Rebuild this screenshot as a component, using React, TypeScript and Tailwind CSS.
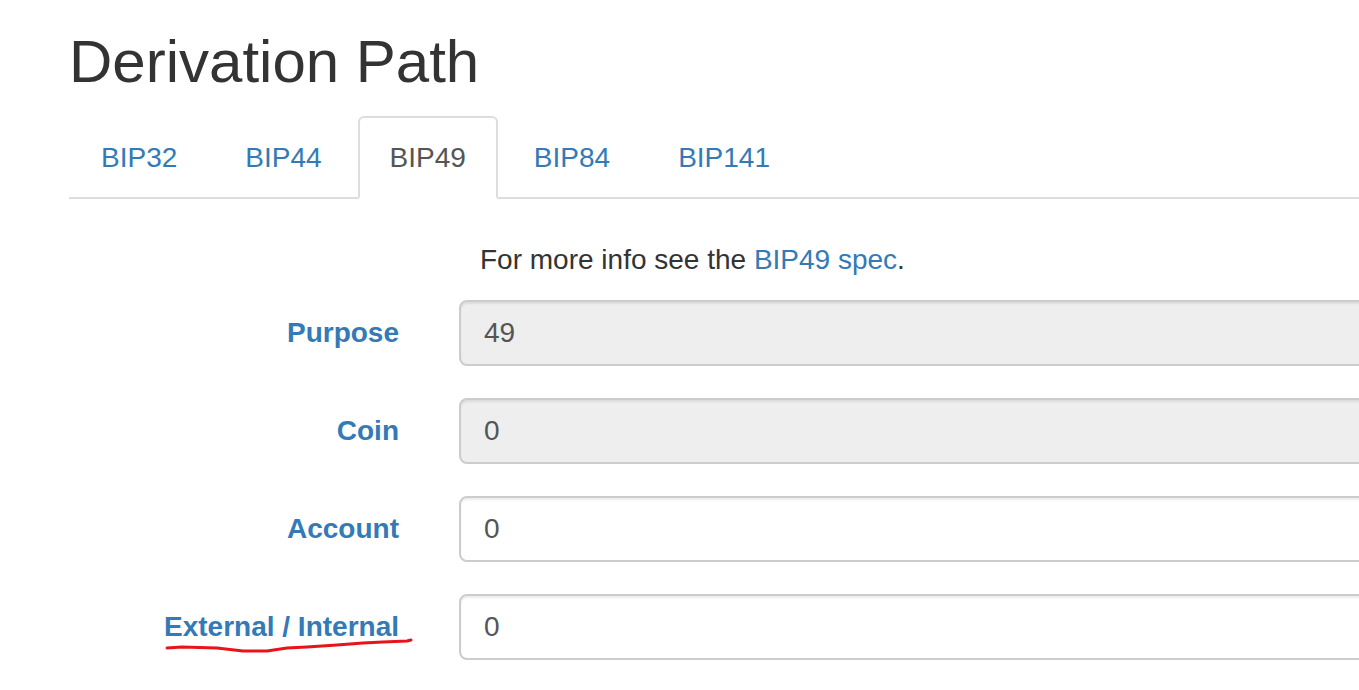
import React from "react";

const tabs = ["BIP32", "BIP44", "BIP49", "BIP84", "BIP141"];

const fields = [
  { label: "Purpose", value: "49", disabled: true },
  { label: "Coin", value: "0", disabled: true },
  { label: "Account", value: "0", disabled: false },
  { label: "External / Internal", value: "0", disabled: false },
];

export default function App() {
  return (
    <div
      className="relative w-[1359px] h-[690px] overflow-hidden bg-white text-[#333]"
      style={{ fontFamily: '"Liberation Sans", Arial, sans-serif' }}
    >
      <div className="pl-[69px]">
        <h1 className="pt-[29px] text-[60px] leading-[66px] font-normal">Derivation Path</h1>

        {/* tabs */}
        <ul className="mt-[21px] flex w-[1330px] border-b-2 border-[#ddd]">
          {tabs.map((t) => {
            const active = t === "BIP49";
            return (
              <li key={t} className="mr-[4px] -mb-[2px] shrink-0">
                <a
                  className={
                    active
                      ? "flex h-[83px] items-center rounded-t-[6px] border-2 border-[#ddd] border-b-white bg-white px-[30px] text-[28px] text-[#555]"
                      : "flex h-[83px] items-center rounded-t-[6px] border-2 border-transparent px-[30px] text-[28px] text-[#337ab7]"
                  }
                >
                  {t}
                </a>
              </li>
            );
          })}
        </ul>

        <p className="mt-[41px] pl-[411px] text-[28px] leading-[40px]">
          For more info see the <a className="text-[#337ab7]">BIP49 spec</a>.
        </p>

        <div className="mt-[20px] flex flex-col gap-[32px]">
          {fields.map((f) => (
            <div key={f.label} className="flex items-center">
              <label className="w-[330px] shrink-0 text-right text-[28px] font-bold text-[#337ab7]">{f.label}</label>
              <div
                className={
                  f.disabled
                    ? "ml-[60px] flex h-[66px] w-[940px] shrink-0 items-center rounded-[8px] border-2 border-[#ccc] bg-[#eee] pl-[23px] text-[28px] text-[#555] shadow-[inset_0_2px_2px_rgba(0,0,0,0.075)]"
                    : "ml-[60px] flex h-[66px] w-[940px] shrink-0 items-center rounded-[8px] border-2 border-[#ccc] bg-white pl-[23px] text-[28px] text-[#555] shadow-[inset_0_2px_2px_rgba(0,0,0,0.075)]"
                }
              >
                {f.value}
              </div>
            </div>
          ))}
        </div>
      </div>

      {/* hand-drawn red underline */}
      <svg className="absolute left-0 top-0 pointer-events-none" width="1359" height="690">
        <path
          d="M167 648 L182 647 L217 648 L243 651 L267 651 L287 648 L307 647 L337 645 L363 643 L383 642 L407 641 L411 640"
          fill="none"
          stroke="#e8141c"
          strokeWidth="3"
          strokeLinecap="round"
          strokeLinejoin="round"
        />
      </svg>
    </div>
  );
}
